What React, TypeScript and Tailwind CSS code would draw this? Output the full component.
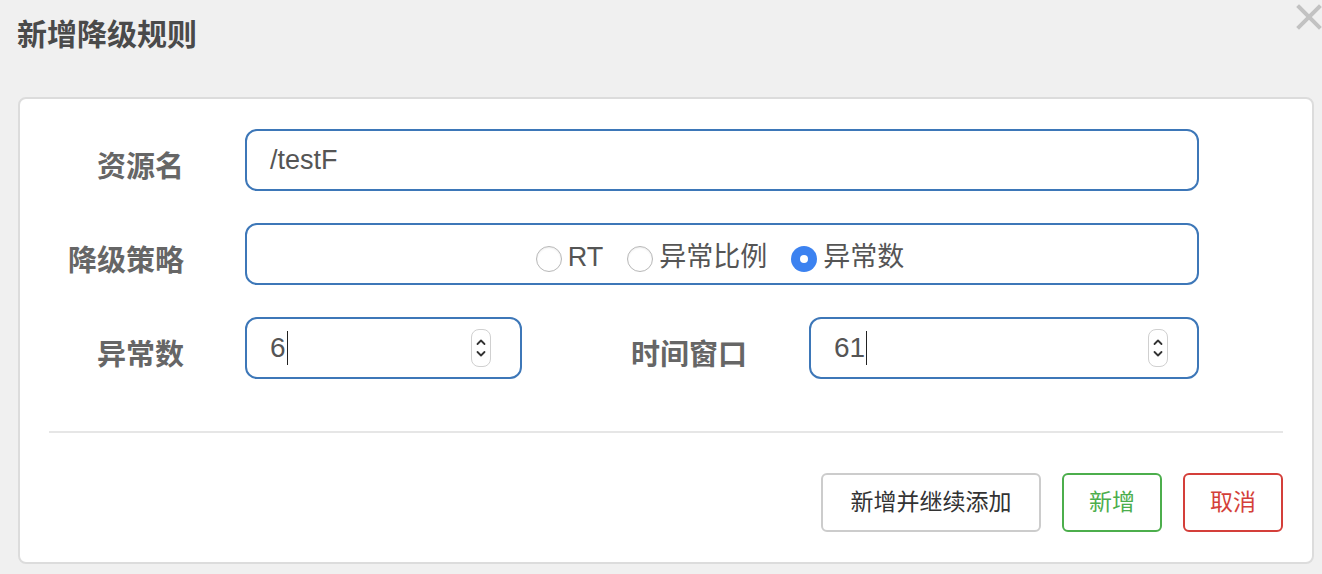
import React from "react";

const FONT = { fontFamily: '"Liberation Sans", "Noto Sans CJK SC", sans-serif' };

function Radio({ checked, label }: { checked?: boolean; label: string }) {
  return (
    <label className="flex items-center gap-[6px]">
      {checked ? (
        <span className="flex h-[26px] w-[26px] items-center justify-center rounded-full bg-[#3c82f0]">
          <span className="h-[8px] w-[8px] rounded-full bg-white" />
        </span>
      ) : (
        <span className="h-[26px] w-[26px] rounded-full border border-[#b8b8b8] bg-white shadow-[inset_0_1px_2px_rgba(0,0,0,0.08)]" />
      )}
      <span className="relative top-[-2px] text-[27px] leading-none text-[#555]">{label}</span>
    </label>
  );
}

function Spinner() {
  return (
    <div className="flex h-[38px] w-[20px] flex-col items-center justify-center rounded-[8px] border border-[#d0d0d0] bg-white">
      <svg width="12" height="30" viewBox="0 0 12 30" fill="none" stroke="#333" strokeWidth="1.8" strokeLinecap="round" strokeLinejoin="round">
        <path d="M2.5 11 L6 7.5 L9.5 11" />
        <path d="M2.5 19 L6 22.5 L9.5 19" />
      </svg>
    </div>
  );
}

function NumberInput({ value, width }: { value: string; width: string }) {
  return (
    <div className={`flex h-[62px] ${width} items-center justify-between rounded-[12px] border-2 border-[#3d77b8] bg-white pl-[23px] pr-[29px]`}>
      <div className="flex items-center">
        <span className="text-[28px] leading-none text-[#555]">{value}</span>
        <span className="ml-[1px] h-[34px] w-[1px] bg-[#222]" />
      </div>
      <Spinner />
    </div>
  );
}

const LABEL = "mt-[14px] text-right text-[29px] font-bold leading-none text-[#666]";

export default function App() {
  return (
    <div className="relative h-[574px] w-[1322px] overflow-hidden bg-[#f0f0f0]" style={FONT}>
      <div className="h-[97px] pl-[17px] pt-[20px]">
        <h1 className="text-[30px] font-bold leading-[30px] text-[#4a4a4a]">新增降级规则</h1>
      </div>
      <button className="absolute right-[0px] top-[4px] h-[26px] w-[26px]">
        <svg width="26" height="26" viewBox="0 0 26 26" stroke="#c2c2c2" strokeWidth="4" strokeLinecap="square">
          <path d="M3 3 L23 23" />
          <path d="M23 3 L3 23" />
        </svg>
      </button>

      <div className="ml-[18px] h-[467px] w-[1296px] rounded-[8px] border-2 border-[#dcdcdc] bg-white px-[29px] pt-[30px]">
        <div className="flex h-[62px] items-center">
          <div className={`w-[135px] ${LABEL}`}>资源名</div>
          <div className="ml-[61px] flex h-[62px] w-[954px] items-center rounded-[12px] border-2 border-[#3d77b8] bg-white pl-[23px]">
            <span className="text-[27px] leading-none text-[#555]">/testF</span>
          </div>
        </div>

        <div className="mt-[32px] flex h-[62px] items-center">
          <div className={`w-[135px] ${LABEL}`}>降级策略</div>
          <div className="ml-[61px] flex h-[62px] w-[954px] items-center justify-center gap-[24px] rounded-[12px] border-2 border-[#3d77b8] bg-white pt-[10px] pr-[4px]">
            <Radio label="RT" />
            <Radio label="异常比例" />
            <Radio checked label="异常数" />
          </div>
        </div>

        <div className="mt-[32px] flex h-[62px] items-center">
          <div className={`w-[135px] ${LABEL}`}>异常数</div>
          <div className="ml-[61px]">
            <NumberInput value="6" width="w-[277px]" />
          </div>
          <div className={`w-[225px] ${LABEL}`}>时间窗口</div>
          <div className="ml-[62px]">
            <NumberInput value="61" width="w-[390px]" />
          </div>
        </div>

        <div className="mt-[52px] h-[2px] w-full bg-[#e6e6e6]" />

        <div className="mt-[40px] flex justify-end gap-[21px]">
          <button className="h-[59px] w-[220px] rounded-[6px] border-2 border-[#cccccc] bg-white text-[23px] text-[#333]">新增并继续添加</button>
          <button className="h-[59px] w-[100px] rounded-[6px] border-2 border-[#4cae4c] bg-white text-[23px] text-[#4cae4c]">新增</button>
          <button className="h-[59px] w-[100px] rounded-[6px] border-2 border-[#d43f3a] bg-white text-[23px] text-[#d43f3a]">取消</button>
        </div>
      </div>
    </div>
  );
}
